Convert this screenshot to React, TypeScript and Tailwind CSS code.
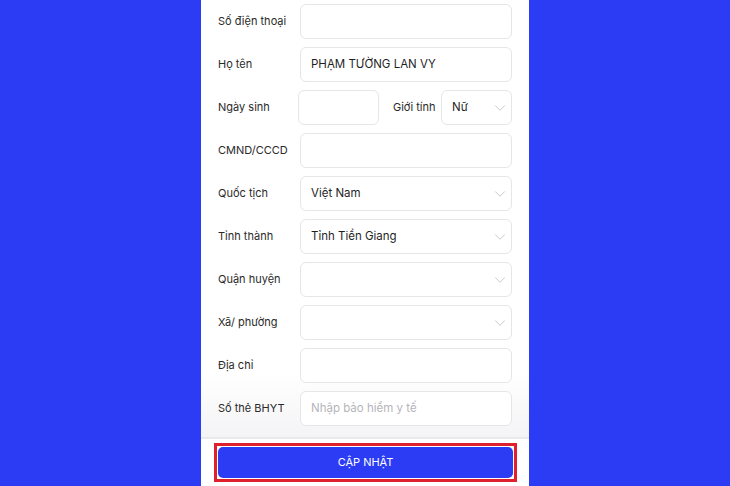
import { ChevronDown } from "lucide-react";

const box = "h-[35px] rounded-[6px] border border-[#e6e6e8] bg-white flex items-center pl-[10px] pr-[2px] text-[11.5px] text-[#1f1f1f]";

function Chevron() {
  return <ChevronDown className="ml-auto text-[#c9c9ce]" size={18} strokeWidth={1.3} />;
}

function Row({ label, children }: { label: string; children?: React.ReactNode }) {
  return (
    <div className="flex items-center">
      <span className="w-[82px] shrink-0 text-[11px] text-[#2a2a2a]">{label}</span>
      <div className="flex-1">{children}</div>
    </div>
  );
}

export default function App() {
  return (
    <div
      className="flex h-[486px] w-[730px] justify-center bg-[#2b3cf4]"
      style={{ fontFamily: "Inter, 'Noto Sans', sans-serif" }}
    >
      <div className="flex h-full w-[328px] flex-col bg-white">
        <div className="flex flex-1 flex-col gap-[8px] bg-gradient-to-b from-white from-85% to-[#f4f4f6] px-[17px] pt-[4px]">
          <Row label="Số điện thoại">
            <div className={box} />
          </Row>
          <Row label="Họ tên">
            <div className={box}>PHẠM TƯỜNG LAN VY</div>
          </Row>
          <div className="flex items-center">
            <span className="w-[80px] shrink-0 text-[11px] text-[#2a2a2a]">Ngày sinh</span>
            <div className={`${box} w-[81px]`} />
            <span className="ml-[14px] w-[48px] text-[11px] text-[#2a2a2a]">Giới tính</span>
            <div className={`${box} flex-1`}>
              Nữ
              <Chevron />
            </div>
          </div>
          <Row label="CMND/CCCD">
            <div className={box} />
          </Row>
          <Row label="Quốc tịch">
            <div className={box}>
              Việt Nam
              <Chevron />
            </div>
          </Row>
          <Row label="Tỉnh thành">
            <div className={box}>
              Tỉnh Tiền Giang
              <Chevron />
            </div>
          </Row>
          <Row label="Quận huyện">
            <div className={box}>
              <Chevron />
            </div>
          </Row>
          <Row label="Xã/ phường">
            <div className={box}>
              <Chevron />
            </div>
          </Row>
          <Row label="Địa chỉ">
            <div className={box} />
          </Row>
          <Row label="Số thẻ BHYT">
            <div className={`${box} text-[#b5b5ba]`}>Nhập bảo hiểm y tế</div>
          </Row>
        </div>
        <div className="h-[49px] shrink-0 border-t-2 border-[#e9e9ec] bg-white pl-[13px] pr-[12px] pt-[4px]">
          <div className="border-[3px] border-[#e0202c] p-px">
            <button
              type="button"
              className="flex h-[31px] w-full items-center justify-center rounded-[5px] bg-[#2b3cf4] text-[11px] text-white"
            >
              CẬP NHẬT
            </button>
          </div>
        </div>
      </div>
    </div>
  );
}
